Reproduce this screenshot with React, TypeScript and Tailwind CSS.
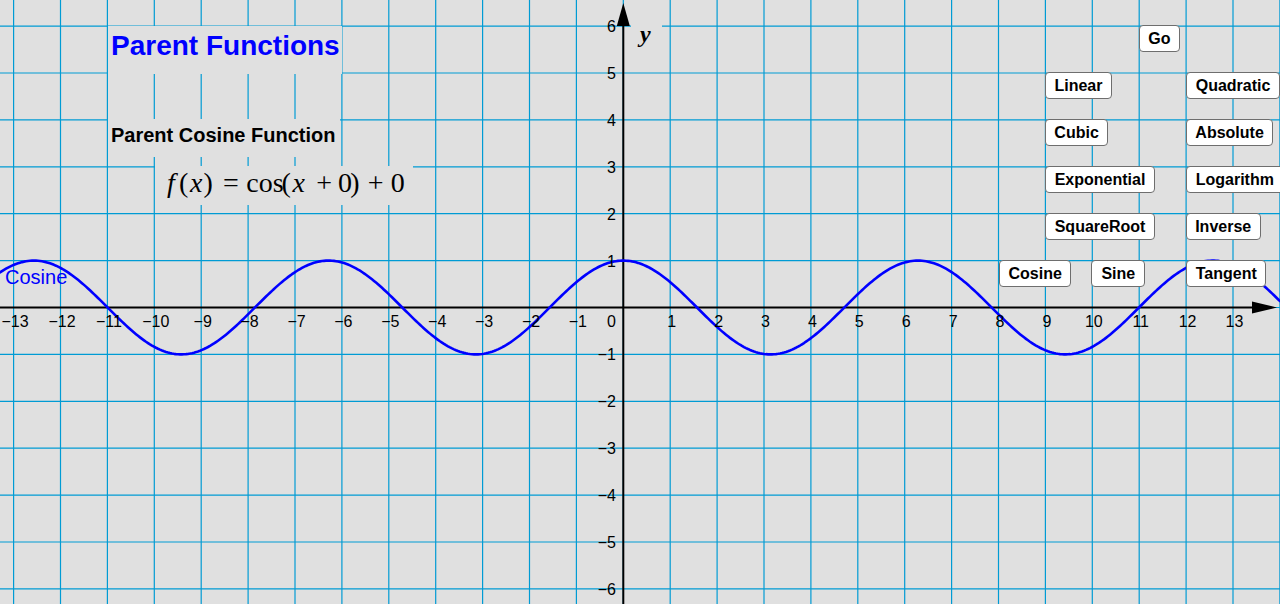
import React from 'react';

const U = 46.9;
const OX = 623.3;
const OY = 307.5;
const W = 1280;
const H = 604;
const GRID = '#009bd4';
const MINUS = '\u2212';

const fmt = (n: number) => (n < 0 ? MINUS + Math.abs(n) : String(n));

function curvePath(): string {
  const pts: string[] = [];
  for (let px = 0; px <= W; px += 2) {
    const x = (px - OX) / U;
    const y = OY - U * Math.cos(x);
    pts.push(`${pts.length ? 'L' : 'M'}${px.toFixed(1)} ${y.toFixed(2)}`);
  }
  return pts.join(' ');
}

function Graph() {
  const xs: number[] = [];
  for (let k = -13; k <= 14; k++) xs.push(k);
  const ys: number[] = [];
  for (let j = -6; j <= 6; j++) ys.push(j);
  return (
    <svg className="absolute inset-0" width={W} height={H} viewBox={`0 0 ${W} ${H}`}>
      {xs.map((k) => (
        <line key={`v${k}`} x1={OX + k * U} y1={0} x2={OX + k * U} y2={H} stroke={GRID} strokeWidth={1.2} />
      ))}
      {ys.map((j) => (
        <line key={`h${j}`} x1={0} y1={OY + j * U} x2={W} y2={OY + j * U} stroke={GRID} strokeWidth={1.2} />
      ))}
      <rect x={631} y={14} width={31} height={38} fill="#e0e0e0" />
      <line x1={0} y1={OY} x2={1254} y2={OY} stroke="#000" strokeWidth={2} />
      <polygon points={`1252,${OY - 6} 1277,${OY} 1252,${OY + 6}`} fill="#000" />
      <line x1={OX} y1={H} x2={OX} y2={24} stroke="#000" strokeWidth={2} />
      <polygon points={`${OX - 6.5},26 ${OX},3 ${OX + 6.5},26`} fill="#000" />
      <path d={curvePath()} fill="none" stroke="#0000ff" strokeWidth={2.6} strokeLinejoin="round" strokeLinecap="round" />
      <g fontFamily="'Liberation Sans', Arial, sans-serif" fontSize={16} fill="#000">
        {xs
          .filter((k) => k !== 0 && k <= 13)
          .map((k) => (
            <text key={`xl${k}`} x={OX + k * U + 1.5} y={327} textAnchor="middle">
              {fmt(k)}
            </text>
          ))}
        <text x={616} y={327} textAnchor="end">
          0
        </text>
        {ys
          .filter((j) => j !== 0)
          .map((j) => (
            <text key={`yl${j}`} x={616} y={OY - j * U + 6} textAnchor="end">
              {fmt(j)}
            </text>
          ))}
      </g>
      <text
        x={640}
        y={42}
        fontFamily="'Liberation Serif', 'Times New Roman', serif"
        fontStyle="italic"
        fontWeight="bold"
        fontSize={24}
        fill="#000"
      >
        y
      </text>
    </svg>
  );
}

const tokens: { t: string; cls: string }[] = [
  { t: 'f', cls: 'w-[15.6px] italic' },
  { t: '(', cls: 'w-[10.2px]' },
  { t: 'x', cls: 'w-[14.8px] italic' },
  { t: ')', cls: 'w-[9.4px]' },
  { t: '=', cls: 'w-[35.8px]' },
  { t: 'cos', cls: 'w-[32.4px]' },
  { t: '(', cls: 'w-[10.2px]' },
  { t: 'x', cls: 'w-[14.6px] italic' },
  { t: '+', cls: 'w-[36.4px]' },
  { t: '0', cls: 'w-[5.2px]' },
  { t: ')', cls: 'w-[14.8px]' },
  { t: '+', cls: 'w-[26.8px]' },
  { t: '0', cls: 'w-[17.2px]' },
];

function Btn({ label, cls = '' }: { label: string; cls?: string }) {
  return (
    <button
      className={`h-[27px] shrink-0 flex items-center justify-center bg-white border border-[#6e6e6e] rounded-[4px] text-[16px] font-bold text-black leading-none whitespace-nowrap ${cls}`}
    >
      {label}
    </button>
  );
}

function PairRow({ a, aw, b, bw }: { a: string; aw: string; b: string; bw: string }) {
  return (
    <div className="flex pl-[45.7px]">
      <div className="w-[141px] shrink-0">
        <Btn label={a} cls={aw} />
      </div>
      <Btn label={b} cls={bw} />
    </div>
  );
}

export default function App() {
  return (
    <div className="relative w-[1280px] h-[604px] overflow-hidden bg-[#e0e0e0] font-['Liberation_Sans',Arial,sans-serif]">
      <Graph />

      {/* Text boxes on the canvas */}
      <div className="absolute left-[108px] top-[25.5px] flex flex-col">
        <div className="w-[234px] h-[48.2px] bg-[#e0e0e0] pl-[3px] pt-[6.8px]">
          <div className="text-[28px] leading-none font-bold text-[#0000ff] whitespace-nowrap">Parent Functions</div>
        </div>
        <div className="mt-[45.7px] w-[232px] h-[37.6px] bg-[#e0e0e0] pl-[3px] pt-[6px]">
          <div className="text-[20px] leading-none font-bold text-black whitespace-nowrap">Parent Cosine Function</div>
        </div>
        <div className="mt-[9.3px] ml-[47px] w-[258px] h-[38.7px] bg-[#e0e0e0] pl-[8px] pt-[2.7px]">
          <div className="flex items-baseline text-[28px] leading-none text-black font-['Liberation_Serif','Times_New_Roman',serif] whitespace-nowrap">
            {tokens.map((tk, i) => (
              <span key={i} className={`flex justify-center shrink-0 ${tk.cls}`}>
                {tk.t}
              </span>
            ))}
          </div>
        </div>
      </div>

      {/* Curve label */}
      <div className="absolute left-[5px] top-[267.1px] text-[20px] leading-none text-[#0000ff] whitespace-nowrap">Cosine</div>

      {/* Buttons */}
      <div className="absolute left-[999px] top-[25.3px] flex flex-col gap-[20px]">
        <div className="flex pl-[139.7px]">
          <Btn label="Go" cls="w-[41.5px]" />
        </div>
        <PairRow a="Linear" aw="w-[67.5px]" b="Quadratic" bw="px-[9px]" />
        <PairRow a="Cubic" aw="w-[63.8px]" b="Absolute" bw="w-[87.8px]" />
        <PairRow a="Exponential" aw="w-[110.7px]" b="Logarithm" bw="px-[9px]" />
        <PairRow a="SquareRoot" aw="w-[110.7px]" b="Inverse" bw="w-[75px]" />
        <div className="flex">
          <div className="w-[92.3px] shrink-0">
            <Btn label="Cosine" cls="w-[72.3px]" />
          </div>
          <div className="w-[94.7px] shrink-0">
            <Btn label="Sine" cls="w-[54px]" />
          </div>
          <Btn label="Tangent" cls="w-[80.5px]" />
        </div>
      </div>
    </div>
  );
}
